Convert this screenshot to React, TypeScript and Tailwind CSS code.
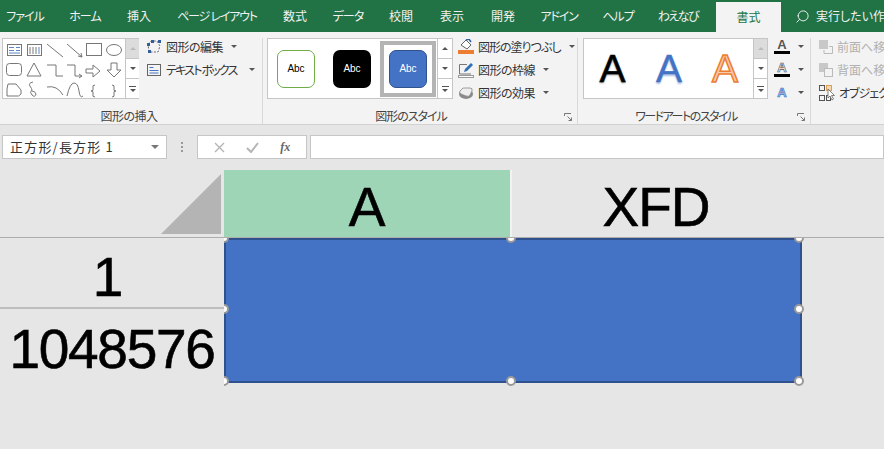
import { Search } from "lucide-react";

const jp = "font-['Noto_Sans_CJK_JP','Noto_Sans',sans-serif]";

const tabs = [
  { label: "ファイル", w: "w-[50px]", t: "tracking-[-1px]" },
  { label: "ホーム", w: "w-[70px]", t: "tracking-[-1px]" },
  { label: "挿入", w: "w-[38px]", t: "" },
  { label: "ページ レイアウト", w: "w-[118px]", t: "tracking-[-1.2px]" },
  { label: "数式", w: "w-[38px]", t: "" },
  { label: "データ", w: "w-[68px]", t: "tracking-[-1px]" },
  { label: "校閲", w: "w-[38px]", t: "" },
  { label: "表示", w: "w-[64px]", t: "" },
  { label: "開発", w: "w-[38px]", t: "" },
  { label: "アドイン", w: "w-[74px]", t: "tracking-[-1.2px]" },
  { label: "ヘルプ", w: "w-[44px]", t: "tracking-[-1px]" },
  { label: "わえなび", w: "w-[76px]", t: "tracking-[-1.5px]" },
];

function Caret({ className = "" }: { className?: string }) {
  return <span className={`inline-block w-0 h-0 border-x-[3px] border-x-transparent border-t-[3px] border-t-[#555] ${className}`} />;
}

// three stacked scroll buttons on the right of a gallery
function GalleryScroll({ disabledTop = false, width = "w-[15px]" }: { disabledTop?: boolean; width?: string }) {
  return (
    <div className={`${width} h-full flex flex-col border-l border-[#c6c6c6] bg-white shrink-0`}>
      <div className={`flex-1 flex items-center justify-center border-b border-[#c6c6c6] ${disabledTop ? "bg-[#dcdcdc]" : ""}`}>
        <span className={`w-0 h-0 border-x-[3px] border-x-transparent border-b-[3px] ${disabledTop ? "border-b-[#bbb]" : "border-b-[#555]"}`} />
      </div>
      <div className="flex-1 flex items-center justify-center border-b border-[#c6c6c6]">
        <Caret />
      </div>
      <div className="flex-1 flex flex-col items-center justify-center gap-[2px]">
        <span className="w-[7px] h-px bg-[#555]" />
        <Caret />
      </div>
    </div>
  );
}

function ShapeGallery() {
  return (
    <svg width="122" height="60" viewBox="0 0 122 60" fill="none" stroke="#777" strokeWidth="1" className="shrink-0">
      <rect x="4.500" y="5.500" width="14" height="11" />
      <path d="M6 8.500h5M6 11.500h5M6 14h11M13 8.500h4M13 11.500h4" stroke="#5b86c9" />
      <rect x="24.500" y="5.500" width="14" height="11" />
      <path d="M27 8v7M30 8v7M33 8v7" />
      <path d="M36 8v7" stroke="#5b86c9" />
      <path d="M44 5l16 13M64 5l15 13M79 18l-4-1M79 18l-1-4" />
      <rect x="83.500" y="4.500" width="15" height="12" />
      <ellipse cx="111" cy="11" rx="7.500" ry="5.500" />
      <rect x="3.500" y="24.500" width="15" height="12" rx="3" />
      <path d="M31 24l-7 13h14z" />
      <path d="M44 26h9v11h7" />
      <path d="M64 26h8v11h7M79 37l-3-2M79 37l-3 2" />
      <path d="M83 30h7v-4l7 6-7 6v-4h-7z" />
      <path d="M108 24h6v7h4l-7 7-7-7h4z" />
      <path d="M5 45h8l5 6v4q-2 3-6 2H4v-7z" />
      <path d="M30 43q-5 1-3 4t2 4q-3 2 0 5t4-1q-1-3-4-3" />
      <path d="M44 48q10-2 16 8" />
      <path d="M64 57q3-13 7-13t5 8 4 5" />
      <path d="M92 46q-3 0-2 3t-2 3q3 0 2 3t2 3M109 46q3 0 2 3t2 3q-3 0-2 3t-2 3" />
    </svg>
  );
}

function EditIcon() {
  return (
    <svg width="16" height="15" viewBox="0 0 16 15" fill="none" className="shrink-0">
      <path d="M2 5l3-3h6l3 5-2 6H3z" stroke="#666" strokeDasharray="2 1.500" />
      <rect x="1" y="4" width="3" height="3" fill="#2f5f9e" />
      <rect x="5" y="1" width="3" height="3" fill="#2f5f9e" />
      <rect x="12" y="1" width="3" height="3" fill="#2f5f9e" />
      <rect x="2" y="11" width="3" height="3" fill="#2f5f9e" />
    </svg>
  );
}

function TextBoxIcon() {
  return (
    <svg width="16" height="14" viewBox="0 0 16 14" fill="none" className="shrink-0">
      <rect x="1.500" y="1.500" width="13" height="11" stroke="#666" />
      <path d="M3.500 4.500h4M3.500 7.500h9M3.500 10h9" stroke="#4472c4" />
    </svg>
  );
}

function FillIcon() {
  return (
    <svg width="16" height="15" viewBox="0 0 16 15" fill="none" className="shrink-0">
      <path d="M3 6l5-5 5 5-4 4z" fill="#fff" stroke="#666" />
      <path d="M8 1l3-1 2 3" stroke="#2f5f9e" strokeWidth="1.500" />
      <rect x="0" y="11" width="16" height="4" fill="#ed7d31" />
    </svg>
  );
}

function BorderIcon() {
  return (
    <svg width="16" height="16" viewBox="0 0 16 16" fill="none" className="shrink-0">
      <path d="M1.500 12V2.500H9" stroke="#777" />
      <path d="M1.500 12H13" stroke="#777" />
      <path d="M6 10l1-3 6-6 2 2-6 6z" fill="#2f6fb5" />
      <rect x="0.500" y="13.500" width="15" height="2" fill="#fff" stroke="#999" />
    </svg>
  );
}

function EffectIcon() {
  return (
    <svg width="16" height="14" viewBox="0 0 16 14" className="shrink-0">
      <ellipse cx="8" cy="8" rx="7" ry="5" fill="#8a8a8a" />
      <path d="M5 2h7q3 0 2 3l-2 4q-1 2-4 1L3 8Q1 7 2 5z" fill="#eee" stroke="#888" strokeWidth="0.800" />
    </svg>
  );
}

function ToolRow({
  icon,
  label,
  caretGap = "ml-1",
  dim = false,
  textClass = "",
}: {
  icon: React.ReactNode;
  label: string;
  caretGap?: string;
  dim?: boolean;
  textClass?: string;
}) {
  return (
    <div className={`flex items-center gap-[4px] h-[23px] text-[12px] whitespace-nowrap ${dim ? "text-[#b1b1b1]" : "text-[#333]"}`}>
      {icon}
      <span className={textClass}>{label}</span>
      {!dim && <Caret className={caretGap} />}
    </div>
  );
}

function GroupLabel({ children, className = "" }: { children: React.ReactNode; className?: string }) {
  return <div className={`h-[18px] leading-[20px] text-center text-[12px] text-[#444] whitespace-nowrap ${className}`}>{children}</div>;
}

function Launcher() {
  return (
    <svg width="8" height="8" viewBox="0 0 8 8" fill="none" stroke="#777" className="absolute right-[5px] bottom-[3px]">
      <path d="M.5 3V.5H7M7.500 7.500L3.500 3.500M7.500 4.500v3h-3" />
    </svg>
  );
}

function AbcThumb({ className }: { className: string }) {
  return <div className={`w-[38px] h-[38px] rounded-[7px] flex items-center justify-center text-[10px] font-['Liberation_Sans',sans-serif] ${className}`}>Abc</div>;
}

function FontA({ bar, outline }: { bar?: string; outline?: boolean }) {
  return (
    <div className="flex items-center gap-[8px] h-[23px]">
      <div className="w-[16px] flex flex-col items-center font-['Liberation_Sans',sans-serif] font-bold">
        <span
          className={`text-[13px] leading-[12px] ${outline ? "text-white [-webkit-text-stroke:0.7px_#555]" : bar ? "text-[#555]" : "text-[#a9c4e8] [-webkit-text-stroke:0.7px_#4472c4]"}`}
        >
          A
        </span>
        {bar && <span className={`w-[16px] h-[3px] ${bar}`} />}
      </div>
      <Caret />
    </div>
  );
}

function Handle({ className }: { className: string }) {
  return <span className={`absolute w-[10px] h-[10px] -ml-[5px] -mt-[5px] rounded-full bg-white border-2 border-[#9a9a9a] ${className}`} />;
}

export default function App() {
  return (
    <div className={`w-[884px] h-[449px] overflow-hidden bg-[#e6e6e6] [font-feature-settings:'palt'] ${jp}`}>
      {/* tab strip */}
      <div className="h-[32px] bg-[#217346] flex items-end text-white text-[12px] whitespace-nowrap overflow-hidden">
        {tabs.map((t) => (
          <div key={t.label} className={`${t.w} ${t.t} h-[32px] leading-[32px] text-center shrink-0 text-[#f2f2f2]`}>
            {t.label}
          </div>
        ))}
        <div className="w-[65px] h-[30px] leading-[30px] bg-[#f3f3f3] text-[#217346] text-center shrink-0">書式</div>
        <div className="flex items-center h-[32px] ml-[14px] gap-[6px] text-[#f2f2f2]">
          <Search size={15} strokeWidth={1.5} className="-scale-x-100" />
          <span>実行したい作業</span>
        </div>
      </div>

      {/* ribbon */}
      <div className="h-[93px] bg-[#f3f3f3] border-b border-[#d2d2d2] flex pt-[6px] overflow-hidden">
        <div className="w-[263px] shrink-0 border-r border-[#d9d9d9] flex flex-col">
          <div className="h-[69px] flex pl-[2px]">
            <div className="w-[137px] h-[61px] flex border border-[#c6c6c6] bg-white shrink-0">
              <ShapeGallery />
              <GalleryScroll disabledTop width="w-[14px]" />
            </div>
            <div className="ml-[7px] flex flex-col -mt-[3px]">
              <ToolRow icon={<EditIcon />} label="図形の編集" textClass="tracking-[-0.5px]" />
              <ToolRow icon={<TextBoxIcon />} label="テキスト ボックス" caretGap="ml-[8px]" textClass="tracking-[-1.8px]" />
            </div>
          </div>
          <GroupLabel className="pr-[4px] tracking-[-0.5px]">図形の挿入</GroupLabel>
        </div>

        <div className="relative w-[315px] shrink-0 border-r border-[#d9d9d9] flex flex-col">
          <div className="h-[69px] flex pl-[4px]">
            <div className="w-[186px] h-[61px] flex border border-[#c6c6c6] bg-white shrink-0">
              <div className="flex-1 flex items-center pl-[9px]">
                <AbcThumb className="bg-white border border-[#70ad47] text-black" />
                <AbcThumb className="ml-[18px] bg-black text-white" />
                <div className="ml-[9px] w-[56px] h-[56px] border-[4px] border-[#b4b4b4] flex items-center justify-center">
                  <AbcThumb className="bg-[#4472c4] border border-[#2f528f] text-white" />
                </div>
              </div>
              <GalleryScroll />
            </div>
            <div className="ml-[5px] flex flex-col -mt-[3px]">
              <ToolRow icon={<FillIcon />} label="図形の塗りつぶし" textClass="tracking-[-1px]" />
              <ToolRow icon={<BorderIcon />} label="図形の枠線" textClass="tracking-[-0.5px]" />
              <ToolRow icon={<EffectIcon />} label="図形の効果" textClass="tracking-[-0.5px]" />
            </div>
          </div>
          <GroupLabel className="pr-[18px] tracking-[-1px]">図形のスタイル</GroupLabel>
          <Launcher />
        </div>

        <div className="relative w-[233px] shrink-0 border-r border-[#d9d9d9] flex flex-col">
          <div className="h-[69px] flex pl-[5px]">
            <div className="w-[185px] h-[61px] flex border border-[#c6c6c6] bg-white shrink-0">
              <div className="flex-1 flex items-center font-['Liberation_Sans',sans-serif] text-[39px] leading-none">
                <span className="w-[57px] text-center text-black [-webkit-text-stroke:0.5px_#000] [text-shadow:0_1px_2px_#777]">A</span>
                <span className="w-[56px] text-center text-[#4472c4] [-webkit-text-stroke:0.5px_#4472c4] [text-shadow:0_2px_2px_#a9bde0]">A</span>
                <span className="w-[56px] text-center text-[#f8cbad] [-webkit-text-stroke:1.5px_#ed7d31]">A</span>
              </div>
              <GalleryScroll disabledTop width="w-[14px]" />
            </div>
            <div className="ml-[6px] flex flex-col -mt-[3px]">
              <FontA bar="bg-black" />
              <FontA bar="bg-black" outline />
              <FontA />
            </div>
          </div>
          <GroupLabel className="pr-[16px] tracking-[-1.5px]">ワードアートのスタイル</GroupLabel>
          <Launcher />
        </div>

        <div className="flex flex-col pl-[8px] -mt-[3px]">
          <ToolRow
            dim
            label="前面へ移動"
            icon={
              <svg width="14" height="14" viewBox="0 0 14 14" className="shrink-0">
                <rect x="0" y="0" width="9" height="9" fill="#c8c8c8" />
                <path d="M10 6.500h3.500v7H5V10" fill="none" stroke="#bbb" />
              </svg>
            }
          />
          <ToolRow
            dim
            label="背面へ移動"
            icon={
              <svg width="14" height="14" viewBox="0 0 14 14" className="shrink-0">
                <rect x="0" y="0" width="9" height="9" fill="#c8c8c8" />
                <rect x="5.500" y="5.500" width="8" height="8" fill="#f3f3f3" stroke="#bbb" />
              </svg>
            }
          />
          <ToolRow
            label="オブジェクトの選択"
            textClass="tracking-[-1px]"
            icon={
              <svg width="16" height="16" viewBox="0 0 16 16" fill="none" className="shrink-0">
                <rect x=".5" y=".5" width="5" height="5" stroke="#555" />
                <rect x=".5" y="10.500" width="5" height="5" stroke="#555" />
                <rect x="7.500" y="10.500" width="4" height="5" stroke="#555" />
                <rect x="7.500" y=".5" width="5" height="5" fill="#f6d9b0" stroke="#d9a05b" />
                <path d="M9 4v9l2-2 2 4 1.500-1-2-3.500h3z" fill="#fff" stroke="#666" strokeWidth=".8" />
              </svg>
            }
          />
        </div>
      </div>

      {/* formula bar */}
      <div className="h-[45px] flex items-start pt-[10px] pl-[2px]">
        <div className="w-[165px] h-[24px] bg-white border border-[#c6c6c6] flex items-center justify-between pl-[7px] pr-[7px] text-[13px] tracking-[1.2px] text-[#333] shrink-0 [font-feature-settings:normal]">
          <span className="whitespace-nowrap">正方形/長方形 1</span>
          <Caret className="border-x-[4px] border-t-[4px] border-t-[#777]" />
        </div>
        <div className="w-[30px] h-[24px] flex flex-col items-center justify-center gap-[2px] shrink-0">
          <span className="w-[2px] h-[2px] bg-[#999]" />
          <span className="w-[2px] h-[2px] bg-[#999]" />
          <span className="w-[2px] h-[2px] bg-[#999]" />
        </div>
        <div className="w-[110px] h-[24px] bg-white border border-[#c6c6c6] flex items-center justify-around px-[5px] shrink-0">
          <svg width="11" height="11" viewBox="0 0 11 11" stroke="#b5b5b5" strokeWidth="1.4" fill="none">
            <path d="M1 1l9 9M10 1l-9 9" />
          </svg>
          <svg width="13" height="11" viewBox="0 0 13 11" stroke="#b5b5b5" strokeWidth="2" fill="none">
            <path d="M1 6l4 4 7-9" />
          </svg>
          <span className="font-['Liberation_Serif',serif] italic font-bold text-[12px] text-[#666]">fx</span>
        </div>
        <div className="ml-[3px] flex-1 h-[24px] bg-white border border-[#c6c6c6]" />
      </div>

      {/* sheet */}
      <div className="relative font-['Liberation_Sans',sans-serif] text-black text-[55px] leading-none [-webkit-text-stroke:0.6px_#000]">
        <div className="h-[68px] flex border-b border-[#adadad]">
          <div className="w-[224px] shrink-0 flex items-end justify-end pr-[3px] pb-[3px]">
            <svg width="60" height="60" viewBox="0 0 60 60">
              <path d="M60 0v60H0z" fill="#b4b4b4" />
            </svg>
          </div>
          <div className="w-[288px] shrink-0 bg-[#9fd5b7] border-r-2 border-[#f2f2f2] flex items-center justify-center pt-[8px]">A</div>
          <div className="w-[286px] shrink-0 ml-[1px] flex items-center justify-center pt-[8px] tracking-[-1px]">XFD</div>
        </div>
        <div className="h-[71px] w-[224px] border-b-2 border-[#bdbdbd] flex items-center justify-center pt-[10px] pr-[8px]">1</div>
        <div className="h-[72px] w-[224px] flex items-center justify-center pt-[8px] tracking-[-1.3px]">1048576</div>

        {/* selected rectangle, its handles are cut off by the row and column headers */}
        <div className="absolute left-[224px] top-[68px] w-[660px] h-[160px] overflow-hidden">
          <div className="absolute left-0 top-0 w-[578px] h-[145px] bg-[#4472c4] border-2 border-[#2f528f]" />
          <Handle className="left-[0px] top-[0px]" />
          <Handle className="left-[287px] top-[0px]" />
          <Handle className="left-[575px] top-[0px]" />
          <Handle className="left-[0px] top-[71px]" />
          <Handle className="left-[575px] top-[71px]" />
          <Handle className="left-[0px] top-[143px]" />
          <Handle className="left-[287px] top-[143px]" />
          <Handle className="left-[575px] top-[143px]" />
        </div>
      </div>
    </div>
  );
}
